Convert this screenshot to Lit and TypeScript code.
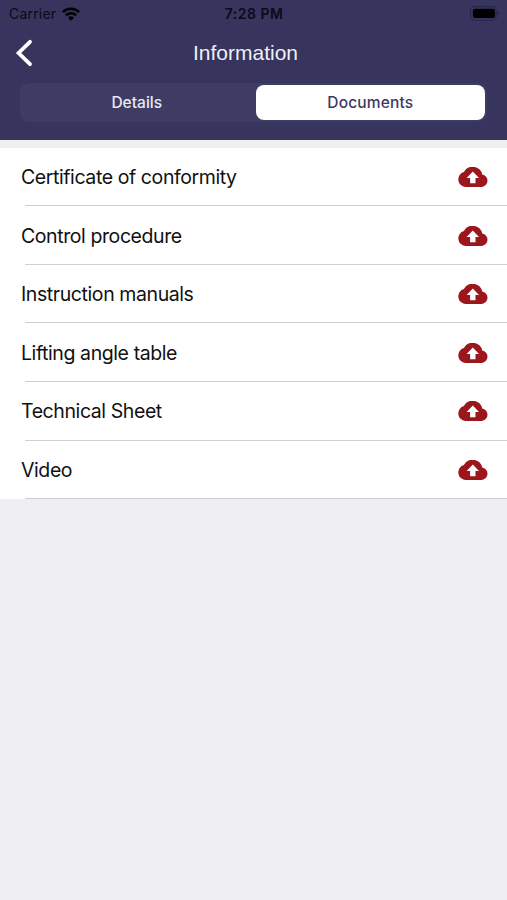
import { LitElement, html, css } from "lit";
import { customElement, property, state } from "lit/decorators.js";
import { classMap } from "lit/directives/class-map.js";

@customElement("status-bar")
class StatusBar extends LitElement {
  static styles = css`
    :host {
      display: grid;
      grid-template-columns: 1fr auto 1fr;
      align-items: center;
      height: 27px;
      padding: 0 8px 0 9px;
      color: #0b0a16;
      font-size: 14px;
    }
    .left { display: flex; align-items: center; gap: 6px; }
    .carrier { letter-spacing: 0.2px; }
    .time { font-weight: 600; letter-spacing: 0.5px; }
    .battery { justify-self: end; }
    svg { display: block; }
  `;
  render() {
    return html`
      <div class="left">
        <span class="carrier">Carrier</span>
        <svg width="18" height="14" viewBox="0 0 18 14" fill="none" stroke="#000" stroke-width="2.6">
          <path d="M.9 5.1a11.5 11.5 0 0 1 16.2 0" />
          <path d="M3.9 8.3a7.3 7.3 0 0 1 10.2 0" />
          <path d="M9 13.7 6 10.7a4.3 4.3 0 0 1 6 0z" fill="#000" stroke="none" />
        </svg>
      </div>
      <span class="time">7:28 PM</span>
      <svg class="battery" width="29" height="15" viewBox="0 0 29 15">
        <rect x=".6" y=".6" width="25.6" height="13.6" rx="4" fill="none" stroke="#28264a" stroke-width="1.1" />
        <rect x="2.9" y="2.8" width="22" height="9.2" rx="2" fill="#000" />
        <path d="M27.2 5.3q1.6.7 1.6 2.1t-1.6 2.1z" fill="#28264a" />
      </svg>
    `;
  }
}

@customElement("document-row")
class DocumentRow extends LitElement {
  @property() label = "";
  static styles = css`
    :host {
      display: flex;
      flex-direction: column;
      height: 58.6px;
      background: #fff;
      color: #111;
      font-size: 19.5px;
      letter-spacing: -0.41px;
    }
    .content {
      flex: 1;
      display: flex;
      align-items: center;
      justify-content: space-between;
      padding: 1.2px 19px 0 21px;
    }
    .divider {
      height: 1px;
      margin-left: 25px;
      background: #cfcfd3;
    }
    svg { display: block; }
  `;
  render() {
    return html`
      <div class="content">
        <span>${this.label}</span>
        <svg width="30" height="20" viewBox="0 0 30 20">
          <path
            d="M24.2 7.5A9.8 9.8 0 0 0 5.9 5.1 7.6 7.6 0 0 0 7.3 20H23.7a6.3 6.3 0 0 0 .5-12.5z"
            fill="#9c171d"
          />
          <path d="M14.8 4.4 21 10.9H17.5V16.2H12.1V10.9H8.6z" fill="#fff" />
        </svg>
      </div>
      <div class="divider"></div>
    `;
  }
}

@customElement("app-root")
class AppRoot extends LitElement {
  @state() private active = "Documents";
  private tabs = ["Details", "Documents"];
  private documents = [
    "Certificate of conformity",
    "Control procedure",
    "Instruction manuals",
    "Lifting angle table",
    "Technical Sheet",
    "Video",
  ];
  static styles = css`
    :host {
      display: block;
      min-height: 100vh;
      background: #eeeef3;
      font-family: Inter, "Liberation Sans", sans-serif;
    }
    header {
      height: 140px;
      box-sizing: border-box;
      background: #37345e;
    }
    .nav {
      display: grid;
      grid-template-columns: 60px 1fr 60px;
      align-items: center;
      height: 51px;
      padding: 0 8px 0 0;
      margin-bottom: 5px;
    }
    .back {
      padding: 0 0 0 15px;
      border: 0;
      background: none;
      justify-self: start;
    }
    .back svg { display: block; }
    h1 {
      margin: 0 0 1px;
      padding-right: 8px;
      text-align: center;
      color: #f0eff8;
      font: 400 21px/1 "Liberation Sans", sans-serif;
    }
    .segments {
      display: grid;
      grid-template-columns: 1fr 1fr;
      gap: 4px;
      height: 39px;
      box-sizing: border-box;
      margin: 0 20px;
      padding: 2px;
      border-radius: 9px;
      background: #3f3c64;
    }
    .segment {
      padding: 0;
      border: 0;
      border-radius: 8px;
      background: none;
      color: #e9e8f5;
      font: 500 15.5px/1 Inter, sans-serif;
    }
    .selected { background: #fff; color: #3d3965; letter-spacing: 0.15px; }
    .list { padding-top: 7.7px; }
  `;
  render() {
    return html`
      <header>
        <status-bar></status-bar>
        <div class="nav">
          <button class="back" aria-label="Back">
            <svg width="18" height="28" viewBox="0 0 18 28" fill="none" stroke="#fff" stroke-width="3.8" stroke-linecap="round">
              <path d="M15 2.8 3.6 14 15 25.2" />
            </svg>
          </button>
          <h1>Information</h1>
        </div>
        <div class="segments">
          ${this.tabs.map(
            (tab) => html`<button
              class=${classMap({ segment: true, selected: tab === this.active })}
              @click=${() => (this.active = tab)}
            >${tab}</button>`
          )}
        </div>
      </header>
      <div class="list">
        ${this.documents.map((name) => html`<document-row .label=${name}></document-row>`)}
      </div>
    `;
  }
}
